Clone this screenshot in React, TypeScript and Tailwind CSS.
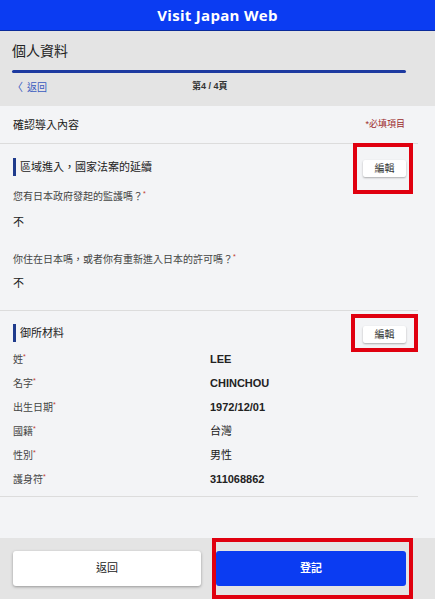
import React from "react";

const cjk = { fontFamily: '"Liberation Sans", "Noto Sans CJK TC", sans-serif' };

const Req: React.FC = () => <span className="text-[#c0392b] text-[7px] align-top">*</span>;

const EditButton: React.FC<{ boxClass: string }> = ({ boxClass }) => (
  <div className="relative">
    <div className={`pointer-events-none absolute border-[4px] border-[#e0000f] ${boxClass}`} />
    <button className="w-[43px] h-[17px] bg-white rounded-[2px] shadow-[0_1px_2px_rgba(0,0,0,0.3)] text-[10px] text-[#333]">
      編輯
    </button>
  </div>
);

const SectionTitle: React.FC<{ title: string; boxClass: string }> = ({ title, boxClass }) => (
  <div className="flex items-center justify-between pl-[13px] pr-[12px]">
    <div className="flex items-center h-[18px]">
      <div className="w-[3px] h-[18px] bg-[#1f3b8c]" />
      <span className="ml-[4px] text-[11px] text-[#222]">{title}</span>
    </div>
    <EditButton boxClass={boxClass} />
  </div>
);

const fields = [
  { label: "姓", value: "LEE", bold: true },
  { label: "名字", value: "CHINCHOU", bold: true },
  { label: "出生日期", value: "1972/12/01", bold: true },
  { label: "國籍", value: "台灣", bold: false },
  { label: "性別", value: "男性", bold: false },
  { label: "護身符", value: "311068862", bold: true },
];

export default function App() {
  return (
    <div className="w-[435px] h-[599px] flex flex-col bg-[#f3f4f6] overflow-hidden" style={cjk}>
      {/* header */}
      <div className="h-[31px] bg-[#0b3cf2] flex items-center justify-center border-b border-[#0a2a9a]">
        <span className="text-white text-[15px] font-bold tracking-[0.3px]" style={{ fontFamily: '"Open Sans", sans-serif' }}>
          Visit Japan Web
        </span>
      </div>

      {/* progress */}
      <div className="h-[75px] bg-[#e4e4e4] px-[12px] pt-[10px]">
        <div className="text-[14px] text-[#222] leading-[20px]">個人資料</div>
        <div className="mt-[9px] mr-[17px] h-[3px] rounded-full bg-[#1d3aa0]" />
        <div className="relative mt-[7px] h-[14px] flex items-center">
          <span className="text-[#3a5bbf] text-[10px] flex items-center gap-[4px]">
            <span className="text-[11px]">〈</span>
            <span>返回</span>
          </span>
          <span className="absolute left-[180px] text-[9px] font-bold text-[#333]">第4 / 4頁</span>
        </div>
      </div>

      {/* content */}
      <div className="flex-1 mt-[1px]">
        <div className="flex items-center justify-between h-[37px] pl-[13px] pr-[13px] border-b border-[#dcdcdc] mr-[17px]">
          <span className="text-[11px] text-[#222]">確認導入內容</span>
          <span className="text-[9px] text-[#9b2a2a]">*必填項目</span>
        </div>

        <div className="mr-[17px] border-b border-[#dcdcdc] pt-[11px] h-[167px]">
          <SectionTitle title="區域進入，國家法案的延續" boxClass="-left-[10px] -right-[7px] -top-[12px] -bottom-[15px]" />
          <div className="pl-[13px] mt-[10px] text-[10px] text-[#444]">
            您有日本政府發起的監護嗎？<Req />
          </div>
          <div className="pl-[13px] mt-[10px] text-[11px] text-[#222]">不</div>
          <div className="pl-[13px] mt-[21px] text-[10px] text-[#444]">
            你住在日本嗎，或者你有重新進入日本的許可嗎？<Req />
          </div>
          <div className="pl-[13px] mt-[8px] text-[11px] text-[#222]">不</div>
        </div>

        <div className="mr-[17px] border-b border-[#dcdcdc] pt-[10px] pb-[5px]">
          <SectionTitle title="御所材料" boxClass="-left-[12px] -right-[12px] -top-[7px] -bottom-[7px]" />
          <div className="mt-[2px]">
            {fields.map((f) => (
              <div key={f.label} className="flex items-center h-[24px] pl-[13px]">
                <span className="w-[197px] text-[10px] text-[#444]">
                  {f.label}
                  <Req />
                </span>
                <span className={`text-[11px] text-[#222] ${f.bold ? "font-bold" : ""}`}>{f.value}</span>
              </div>
            ))}
          </div>
        </div>
      </div>

      {/* footer */}
      <div className="h-[61px] bg-[#e4e4e4] flex items-start pt-[13px] pl-[13px] gap-[15px]">
        <button className="w-[188px] h-[35px] bg-white rounded-[3px] shadow-[0_1px_3px_rgba(0,0,0,0.35)] text-[11px] text-[#222]">
          返回
        </button>
        <div className="relative">
          <div className="pointer-events-none absolute -left-[4px] -right-[7px] -top-[13px] -bottom-[13px] border-[4px] border-[#e0000f]" />
          <button className="w-[190px] h-[35px] bg-[#0b3cf2] rounded-[3px] text-[11px] font-bold text-white">
            登記
          </button>
        </div>
      </div>
    </div>
  );
}
